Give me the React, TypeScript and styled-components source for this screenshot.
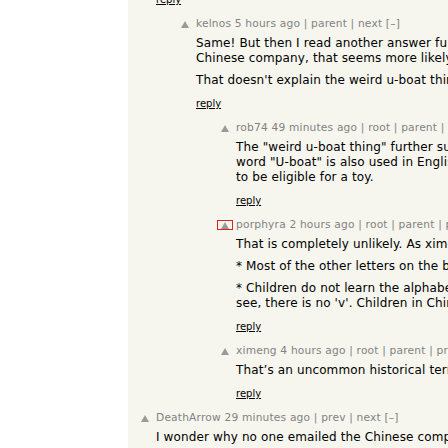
import React from 'react';
import styled, { createGlobalStyle } from 'styled-components';

const Global = createGlobalStyle`
  html, body { margin: 0; padding: 0; background: #fff; }
  body {
    width: 448px; height: 448px; overflow: hidden;
    font-family: "DejaVu Sans", Verdana, sans-serif;
  }
`;

const Page = styled.div`
  display: grid;
  grid-template-columns: 128px 1fr;
  height: 448px;
  overflow: hidden;
`;

const Gutter = styled.div`
  background: #fff;
`;

const Panel = styled.div`
  background: #f6f6ef;
  overflow: hidden;
  padding-left: 10px;
`;

const Thread = styled.div`
  display: flex;
  flex-direction: column;
  margin-top: -7px;
`;

const Row = styled.div<{ $level: number }>`
  display: flex;
  padding-left: ${(p) => p.$level * 40}px;
  margin-bottom: 10px;
`;

const Vote = styled.div`
  width: 14px;
  flex: none;
  margin-right: 4px;
`;

const VoteBox = styled.div<{ $focus?: boolean }>`
  margin-top: 4px;
  height: 8px;
  display: flex;
  justify-content: center;
  align-items: center;
  outline: ${(p) => (p.$focus ? '1px solid #e0201c' : 'none')};
`;

const Content = styled.div`
  display: flex;
  flex-direction: column;
  min-width: 0;
`;

const Comhead = styled.div`
  font-size: 10.67px;
  letter-spacing: 0.18px;
  line-height: 15px;
  color: #828282;
  white-space: nowrap;
`;

const Body = styled.div`
  margin-top: 5px;
  font-size: 12px;
  letter-spacing: 0.13px;
  line-height: 15px;
  color: #000;
  white-space: nowrap;
`;

const Para = styled.p`
  margin: 0;
  & + & { margin-top: 7px; }
`;

const Reply = styled.div<{ $bare?: boolean }>`
  margin-top: ${(p) => (p.$bare ? 0 : 9)}px;
  font-size: 10px;
  line-height: 13px;
  color: #000;
  text-decoration: underline;
  white-space: nowrap;
`;

const Arrow = () => (
  <svg width="8" height="7" viewBox="0 0 8 7">
    <polygon points="4,0 8,7 0,7" fill="#9a9a9a" />
  </svg>
);

type C = {
  level: number;
  head: string;
  paras: string[][];
  focus?: boolean;
  noReply?: boolean;
};

const comments: C[] = [
  {
    level: 1,
    head: 'kelnos 5 hours ago | parent | next [–]',
    paras: [
      [
        'Same! But then I read another answer further down saying it was made by a',
        'Chinese company, that seems more likely to me.',
      ],
      ["That doesn't explain the weird u-boat thing though."],
    ],
  },
  {
    level: 2,
    head: 'rob74 49 minutes ago | root | parent | next [–]',
    paras: [
      [
        'The "weird u-boat thing" further supports that theory: the',
        'word "U-boat" is also used in English, so it would have been considered',
        'to be eligible for a toy.',
      ],
    ],
  },
  {
    level: 2,
    focus: true,
    head: 'porphyra 2 hours ago | root | parent | prev | next [–]',
    paras: [
      ['That is completely unlikely. As ximeng said, it is a Western toy.'],
      ['* Most of the other letters on the board are English words.'],
      [
        '* Children do not learn the alphabet this way in China. As you can',
        "see, there is no 'v'. Children in China learn pinyin instead.",
      ],
    ],
  },
  {
    level: 2,
    head: 'ximeng 4 hours ago | root | parent | prev | next [–]',
    paras: [['That’s an uncommon historical term to use in a toy for children.']],
  },
  {
    level: 0,
    noReply: true,
    head: 'DeathArrow 29 minutes ago | prev | next [–]',
    paras: [['I wonder why no one emailed the Chinese company to ask them.']],
  },
];

export default function App() {
  return (
    <>
      <Global />
      <Page>
        <Gutter />
        <Panel>
          <Thread>
            <Row $level={0}>
              <Vote />
              <Content>
                <Reply $bare>reply</Reply>
              </Content>
            </Row>
            {comments.map((c, i) => (
              <Row key={i} $level={c.level}>
                <Vote>
                  <VoteBox $focus={c.focus}>
                    <Arrow />
                  </VoteBox>
                </Vote>
                <Content>
                  <Comhead>{c.head}</Comhead>
                  <Body>
                    {c.paras.map((p, j) => (
                      <Para key={j}>
                        {p.map((line, k) => (
                          <React.Fragment key={k}>
                            {k > 0 && <br />}
                            {line}
                          </React.Fragment>
                        ))}
                      </Para>
                    ))}
                  </Body>
                  {!c.noReply && <Reply>reply</Reply>}
                </Content>
              </Row>
            ))}
          </Thread>
        </Panel>
      </Page>
    </>
  );
}
